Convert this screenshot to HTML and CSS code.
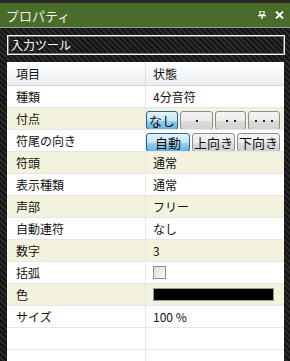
FILE: index.html
```html
<!DOCTYPE html>
<html lang="ja">
<head>
  <meta charset="UTF-8" />
  <title>プロパティ</title>
  <link rel="stylesheet" href="styles.css">
</head>
<body>
  <div class="panel">
    <div class="titlebar">
      <span class="title">プロパティ</span>
      <div class="title-icons">
        <svg width="8" height="8" viewBox="0 0 8 8">
          <rect x="2" y="0" width="4" height="4" fill="none" stroke="#fff" stroke-width="1.2"/>
          <rect x="0" y="4" width="8" height="1.3" fill="#fff"/>
          <rect x="3.4" y="4" width="1.3" height="4" fill="#fff"/>
        </svg>
        <svg width="9" height="8" viewBox="0 0 9 8">
          <path d="M1 0.5 L8 7.5 M8 0.5 L1 7.5" stroke="#fff" stroke-width="1.8"/>
        </svg>
      </div>
    </div>

    <div class="content">
      <div class="tool-box">入力ツール</div>

      <div class="grid">
        <div class="row head">
          <div class="cell name">項目</div>
          <div class="cell value">状態</div>
        </div>
        <div class="row">
          <div class="cell name">種類</div>
          <div class="cell value">4分音符</div>
        </div>
        <div class="row alt">
          <div class="cell name">付点</div>
          <div class="cell buttons">
            <button class="btn on w32">なし</button>
            <button class="btn dots w33"><i></i></button>
            <button class="btn dots w31"><i></i><i></i></button>
            <button class="btn dots w32"><i></i><i></i><i></i></button>
          </div>
        </div>
        <div class="row">
          <div class="cell name">符尾の向き</div>
          <div class="cell buttons">
            <button class="btn on w44">自動</button>
            <button class="btn w43">上向き</button>
            <button class="btn w43">下向き</button>
          </div>
        </div>
        <div class="row alt">
          <div class="cell name">符頭</div>
          <div class="cell value">通常</div>
        </div>
        <div class="row">
          <div class="cell name">表示種類</div>
          <div class="cell value">通常</div>
        </div>
        <div class="row alt">
          <div class="cell name">声部</div>
          <div class="cell value">フリー</div>
        </div>
        <div class="row">
          <div class="cell name">自動連符</div>
          <div class="cell value">なし</div>
        </div>
        <div class="row alt">
          <div class="cell name">数字</div>
          <div class="cell value">3</div>
        </div>
        <div class="row">
          <div class="cell name">括弧</div>
          <div class="cell value"><span class="check"></span></div>
        </div>
        <div class="row alt">
          <div class="cell name">色</div>
          <div class="cell value"><span class="swatch"></span></div>
        </div>
        <div class="row">
          <div class="cell name">サイズ</div>
          <div class="cell value">100 %</div>
        </div>
        <div class="row">
          <div class="cell name"></div>
          <div class="cell value"></div>
        </div>
        <div class="row">
          <div class="cell name"></div>
          <div class="cell value"></div>
        </div>
      </div>
    </div>
  </div>
</body>
</html>
```

FILE: styles.css
```css
body {
  margin: 0;
  font-family: "Noto Sans CJK JP", "Noto Sans", sans-serif;
  font-size: 12px;
  color: #111;
}

.panel {
  width: 290px;
  height: 361px;
  overflow: hidden;
  border-top: 3px solid #2a2a2a;
  box-sizing: border-box;
  background-color: #1e1e1e;
  background-image: repeating-linear-gradient(45deg, #141414 0 2px, #2a2a2a 2px 4px);
}

.titlebar {
  height: 24px;
  background: #4a6c2a;
  border-bottom: 1px solid #9a9a9a;
  display: flex;
  align-items: center;
  justify-content: space-between;
  padding: 0 6px;
}

.title {
  color: #eef4e6;
  font-size: 13px;
}

.title-icons {
  display: flex;
  align-items: center;
  gap: 9px;
}

.content {
  padding: 7px 5px 0 7px;
}

.tool-box {
  height: 20px;
  box-sizing: border-box;
  border: 1px solid #f2f2f2;
  box-shadow: inset 0 0 0 1px #777;
  color: #fff;
  padding: 0 3px;
  line-height: 17px;
  margin-bottom: 7px;
}

.grid {
  width: 277px;
  background: #fff;
}

.row {
  display: grid;
  grid-template-columns: 139px 1fr;
  height: 22px;
  border-bottom: 1px solid #e6e6e6;
  box-sizing: border-box;
}

.row.alt {
  background: #f3f3dd;
}

.row.head {
  height: 24px;
  background: linear-gradient(#ffffff, #eceef2);
  border-bottom: 1px solid #d3d6db;
}

.cell {
  display: flex;
  align-items: center;
  overflow: hidden;
}

.name {
  padding-left: 9px;
  border-right: 1px solid #e6e6e6;
}

.head .name {
  border-right-color: #dde0e4;
}

.value {
  padding-left: 7px;
}

.buttons {
  align-items: flex-end;
  gap: 2px;
  padding-left: 0;
}

.btn {
  height: 19px;
  margin: 0 0 -1px 0;
  padding: 0;
  font-family: inherit;
  font-size: 13px;
  color: #111;
  border: 1px solid #8d8d8d;
  border-radius: 3px;
  background: linear-gradient(#f4f4f4 0, #ececec 50%, #dcdcdc 51%, #d2d2d2 100%);
  line-height: 16px;
  overflow: hidden;
}

.btn.on {
  border-color: #2c628b;
  background: linear-gradient(#e4f3fb 0, #c4e5f6 50%, #98d1ef 51%, #68b3db 100%);
}

.btn.dots {
  display: flex;
  align-items: center;
  justify-content: center;
  gap: 6px;
}

.btn.dots i {
  width: 2px;
  height: 2px;
  background: #222;
}

.w31 { width: 31px; }
.w32 { width: 32px; }
.w33 { width: 33px; }
.w43 { width: 43px; }
.w44 { width: 44px; }

.check {
  width: 11px;
  height: 11px;
  border: 1px solid #8f8f8f;
  background: linear-gradient(135deg, #dcdcdc, #fbfbfb);
}

.swatch {
  width: 119px;
  height: 11px;
  background: #000;
  border: 1px solid #9a9a9a;
}
```
